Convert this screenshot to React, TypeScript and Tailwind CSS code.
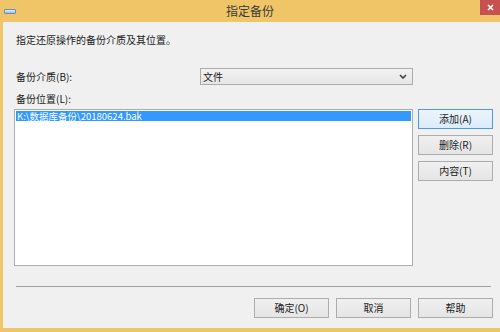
import React from 'react';

const font = { fontFamily: '"Noto Sans CJK SC", "Liberation Sans", sans-serif' };

function DlgButton({ label, primary }: { label: string; primary?: boolean }) {
  return (
    <button
      className={
        'w-[75px] h-[20px] flex items-center justify-center text-[10px] leading-none text-[#1a1a1a] ' +
        (primary
          ? 'border border-[#4f9be3] bg-gradient-to-b from-[#ecf4fc] to-[#dcecfc]'
          : 'border border-[#acacac] bg-gradient-to-b from-[#f0f0f0] to-[#e5e5e5]')
      }
    >
      {label}
    </button>
  );
}

export default function App() {
  return (
    <div className="w-[500px] h-[332px] flex flex-col bg-[#f0c568] overflow-hidden" style={font}>
      {/* title bar */}
      <div className="h-[22px] flex items-center relative shrink-0">
        <div className="ml-[4px] w-[12px] h-[5px] rounded-[1px] border border-[#6f8fb8] bg-gradient-to-b from-[#e4eefa] to-[#9db9dd]" />
        <div className="flex-1 text-center text-[12px] text-[#3a3a3a] leading-none pr-[16px]">指定备份</div>
        <div className="absolute right-0 top-0 w-[20px] h-[15px] bg-[#c75050] flex items-center justify-center">
          <svg width="7" height="7" viewBox="0 0 7 7">
            <path d="M1 1L6 6M6 1L1 6" stroke="#fff" strokeWidth="1.6" />
          </svg>
        </div>
      </div>

      {/* body */}
      <div className="flex-1 ml-[3px] mb-[4px] bg-[#f0f0f0] flex flex-col pl-[11px] pr-[7px] text-[10px] text-[#1a1a1a] leading-[12px]">
        <div className="pl-[2px] mt-[12px]">指定还原操作的备份介质及其位置。</div>

        <div className="flex items-center mt-[22px]">
          <div className="pl-[2px] w-[186px]">备份介质(B):</div>
          <div className="w-[213px] h-[17px] border border-[#acacac] bg-gradient-to-b from-[#f2f2f2] to-[#e6e6e6] flex items-center pl-[2px] pr-[5px]">
            <span className="flex-1">文件</span>
            <svg width="8" height="5" viewBox="0 0 8 5">
              <path d="M1 1L4 4L7 1" stroke="#404040" strokeWidth="1.6" fill="none" />
            </svg>
          </div>
        </div>

        <div className="pl-[2px] mt-[8px]">备份位置(L):</div>

        <div className="flex mt-[4px] gap-[5px]">
          <div className="w-[399px] h-[157px] border border-[#abadb3] bg-white p-px">
            <div className="h-[10px] bg-[#3399ff] text-white text-[9.5px] leading-[10px] pl-px whitespace-nowrap">
              K:\数据库备份\20180624.bak
            </div>
          </div>
          <div className="flex flex-col gap-[6px]">
            <DlgButton label="添加(A)" primary />
            <DlgButton label="删除(R)" />
            <DlgButton label="内容(T)" />
          </div>
        </div>

        <div className="mt-[20px] ml-[2px] w-[475px] h-px bg-[#a0a0a0]" />

        <div className="flex justify-end gap-[7px] mt-[11px]">
          <DlgButton label="确定(O)" />
          <DlgButton label="取消" />
          <DlgButton label="帮助" />
        </div>
      </div>
    </div>
  );
}
